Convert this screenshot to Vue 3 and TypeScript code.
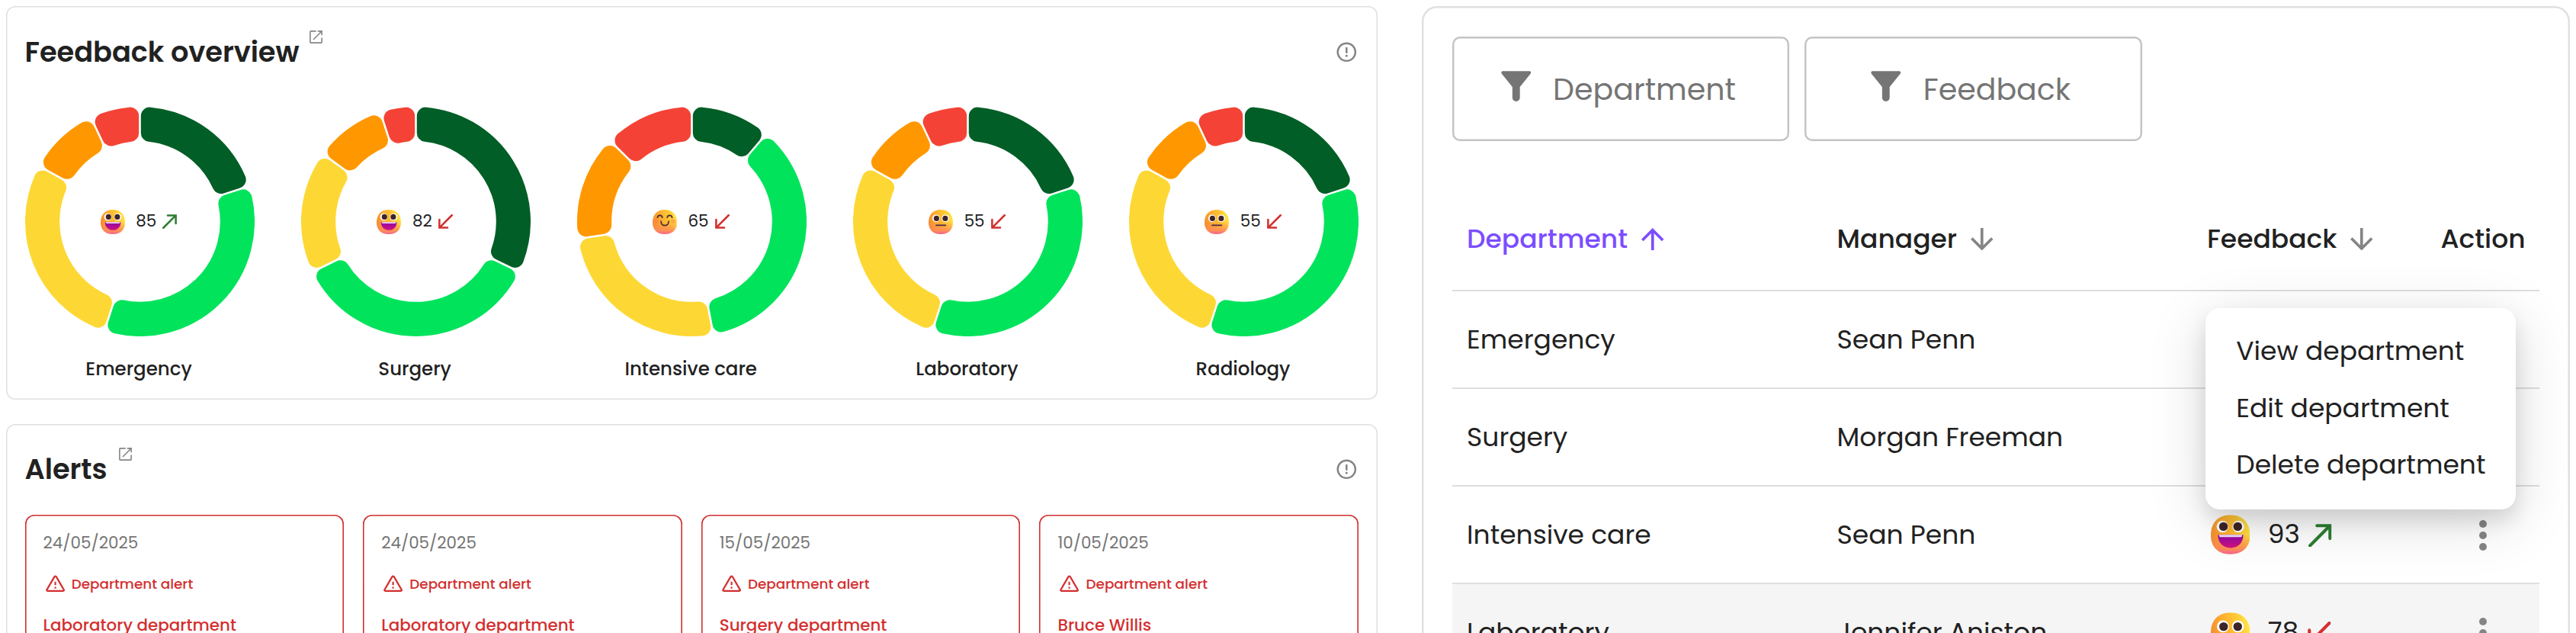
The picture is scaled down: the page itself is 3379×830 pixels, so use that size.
<script setup lang="ts">
import { computed } from 'vue'

type Mood = 'grin' | 'smile' | 'neutral'
type Trend = 'up' | 'down'

interface Rating {
  score: number
  mood: Mood
  trend: Trend
}

interface Donut extends Rating {
  name: string
  shares: number[]
}

interface Row {
  department: string
  manager: string
  rating?: Rating
  hover?: boolean
}

const palette = ['#005e26', '#02e35c', '#fdd835', '#ff9800', '#f44336']

const donuts: Donut[] = [
  { name: 'Emergency', score: 85, mood: 'grin', trend: 'up', shares: [20, 35, 28, 10, 7] },
  { name: 'Surgery', score: 82, mood: 'grin', trend: 'down', shares: [32.2, 35.6, 17.2, 10, 5] },
  { name: 'Intensive care', score: 65, mood: 'smile', trend: 'down', shares: [11.2, 35.8, 25.6, 14.8, 12.6] },
  { name: 'Laboratory', score: 55, mood: 'neutral', trend: 'down', shares: [20, 35, 28, 10, 7] },
  { name: 'Radiology', score: 55, mood: 'neutral', trend: 'down', shares: [20, 35, 28, 10, 7] },
]

const alerts = [
  { date: '24/05/2025', subject: 'Laboratory department' },
  { date: '24/05/2025', subject: 'Laboratory department' },
  { date: '15/05/2025', subject: 'Surgery department' },
  { date: '10/05/2025', subject: 'Bruce Willis' },
]

const rows: Row[] = [
  { department: 'Emergency', manager: 'Sean Penn' },
  { department: 'Surgery', manager: 'Morgan Freeman' },
  { department: 'Intensive care', manager: 'Sean Penn', rating: { score: 93, mood: 'grin', trend: 'up' } },
  { department: 'Laboratory', manager: 'Jennifer Aniston', rating: { score: 78, mood: 'neutral', trend: 'down' }, hover: true },
]

const filters = ['Department', 'Feedback']
const menu = ['View department', 'Edit department', 'Delete department']

const OUTER = 150.5
const INNER = 105.3
const ROUND = 11.5
const GAP = 1.3

// Each slice is inset by the corner radius and stroked back out with round joins.
function slice(from: number, to: number): string {
  const inset = ROUND + GAP
  const ro = OUTER - ROUND
  const ri = INNER + ROUND
  const a0 = from * Math.PI * 2
  const a1 = to * Math.PI * 2
  const point = (r: number, a: number) => `${(r * Math.sin(a)).toFixed(2)} ${(-r * Math.cos(a)).toFixed(2)}`
  const dOut = Math.asin(inset / ro)
  const dIn = Math.asin(inset / ri)
  const large = a1 - a0 - 2 * dOut > Math.PI ? 1 : 0
  return [
    `M${point(ro, a0 + dOut)}`,
    `A${ro} ${ro} 0 ${large} 1 ${point(ro, a1 - dOut)}`,
    `L${point(ri, a1 - dIn)}`,
    `A${ri} ${ri} 0 ${large} 0 ${point(ri, a0 + dIn)}Z`,
  ].join('')
}

const charts = computed(() =>
  donuts.map((d) => {
    let at = 0
    const slices = d.shares.map((share, i) => {
      const path = slice(at / 100, (at + share) / 100)
      at += share
      return { path, color: palette[i] }
    })
    return { ...d, slices }
  }),
)
</script>

<template>
  <svg class="defs" aria-hidden="true">
    <defs>
      <linearGradient id="skin" x1="0" y1="0.5" x2="1" y2="0.25">
        <stop offset="0" stop-color="#f28d2e" />
        <stop offset="0.3" stop-color="#fdaa30" />
        <stop offset="0.7" stop-color="#ffc933" />
        <stop offset="1" stop-color="#ffe84a" />
      </linearGradient>
      <linearGradient id="blush" x1="0" y1="0" x2="0" y2="1">
        <stop offset="0.5" stop-color="#ff8a50" stop-opacity="0" />
        <stop offset="0.85" stop-color="#ff8a5c" stop-opacity="0.85" />
        <stop offset="1" stop-color="#f8629a" />
      </linearGradient>
      <linearGradient id="mouth" x1="0" y1="0" x2="0" y2="1">
        <stop offset="0" stop-color="#8d06a8" />
        <stop offset="1" stop-color="#d3127f" />
      </linearGradient>
      <symbol id="face" viewBox="0 0 32 32">
        <path d="M16 0C25.800 0 32 6 32 16.500C32 26.200 25.800 32 16 32S0 26.200 0 16.500C0 6 6.200 0 16 0Z" fill="url(#skin)" />
        <path d="M16 0C25.800 0 32 6 32 16.500C32 26.200 25.800 32 16 32S0 26.200 0 16.500C0 6 6.200 0 16 0Z" fill="url(#blush)" />
      </symbol>
      <symbol id="grin" viewBox="0 0 32 32">
        <use href="#face" />
        <circle cx="9.500" cy="9.500" r="4.800" fill="#fff" />
        <circle cx="22.400" cy="9.500" r="4.800" fill="#fff" />
        <circle cx="10.300" cy="9.400" r="3.550" fill="#3d2429" />
        <circle cx="21.900" cy="9.400" r="3.550" fill="#3d2429" />
        <path d="M5.800 16.200H26.400C26.400 23 22 26.800 16.100 26.800S5.800 23 5.800 16.200Z" fill="url(#mouth)" />
        <path d="M6.600 16.200H25.600Q25.500 18 24.300 18H7.900Q6.700 18 6.600 16.200Z" fill="#f1dcfb" />
      </symbol>
      <symbol id="smile" viewBox="0 0 32 32">
        <use href="#face" />
        <ellipse cx="4.800" cy="15" rx="3.500" ry="3" fill="#ff7a5c" opacity="0.45" />
        <ellipse cx="27.200" cy="15" rx="3.500" ry="3" fill="#ff7a5c" opacity="0.45" />
        <g fill="none" stroke="#4b2b3a" stroke-width="1.700" stroke-linecap="round">
          <path d="M6.400 10.200C7.200 6.500 12 6.500 12.900 10.200" />
          <path d="M19.200 10.200C20 6.500 24.800 6.500 25.700 10.200" />
          <path d="M11 15C11 22.600 21.200 22.600 21.200 15" />
        </g>
      </symbol>
      <symbol id="neutral" viewBox="0 0 32 32">
        <use href="#face" />
        <circle cx="9.900" cy="11.300" r="4.900" fill="#fff" />
        <circle cx="22.100" cy="11.300" r="4.900" fill="#fff" />
        <circle cx="10.400" cy="11.400" r="3.550" fill="#3d2429" />
        <circle cx="21.900" cy="11.400" r="3.550" fill="#3d2429" />
        <path d="M10 20.400H22.400" stroke="#4b2b4a" stroke-width="1.700" stroke-linecap="round" />
      </symbol>
      <symbol id="trend" viewBox="0 0 30 30">
        <path d="M2 28L27 3M11 2.200H27.800V18.800" fill="none" stroke="currentColor" stroke-width="4" stroke-linecap="round" />
      </symbol>
      <symbol id="open" viewBox="0 0 17 17">
        <path d="M8.700 .9H1.700Q.9 .9 .9 1.700V15.300Q.9 16.100 1.700 16.100H15.300Q16.100 16.100 16.100 15.300V9.500" fill="none" stroke="currentColor" stroke-width="1.600" />
        <path d="M5 12L15.700 1.300M10.700 .9H16.100V6.300" fill="none" stroke="currentColor" stroke-width="1.600" />
      </symbol>
      <symbol id="info" viewBox="0 0 24 24">
        <circle cx="12" cy="12" r="9.100" fill="none" stroke="currentColor" stroke-width="1.900" />
        <path d="M12 7.900V12.300" stroke="currentColor" stroke-width="2" stroke-linecap="round" />
        <circle cx="12" cy="15.900" r="1.150" fill="currentColor" />
      </symbol>
    </defs>
  </svg>

  <main class="page">
    <div class="left">
      <section class="card overview">
        <header class="head">
          <h2>Feedback overview</h2>
          <svg class="open"><use href="#open" /></svg>
          <svg class="info"><use href="#info" /></svg>
        </header>
        <div class="donuts">
          <figure v-for="chart in charts" :key="chart.name" class="donut">
            <div class="ring">
              <svg viewBox="-150.500 -150.500 301 301">
                <path
                  v-for="(s, i) in chart.slices"
                  :key="i"
                  :d="s.path"
                  :fill="s.color"
                  :stroke="s.color"
                  :stroke-width="ROUND * 2"
                  stroke-linejoin="round"
                />
              </svg>
              <div class="score">
                <svg class="emoji"><use :href="'#' + chart.mood" /></svg>
                <span>{{ chart.score }}</span>
                <svg class="trend" :class="chart.trend"><use href="#trend" /></svg>
              </div>
            </div>
            <figcaption>{{ chart.name }}</figcaption>
          </figure>
        </div>
      </section>

      <section class="card alerts">
        <header class="head">
          <h2>Alerts</h2>
          <svg class="open"><use href="#open" /></svg>
          <svg class="info"><use href="#info" /></svg>
        </header>
        <div class="alert-list">
          <article v-for="(alert, i) in alerts" :key="i" class="alert">
            <time>{{ alert.date }}</time>
            <div class="kind">
              <svg viewBox="0 0 24 24">
                <path d="M12 3.100Q12.700 3.100 13.100 3.800L21.700 18.500Q22.500 20.100 20.900 20.100H3.100Q1.500 20.100 2.300 18.500L10.900 3.800Q11.300 3.100 12 3.100Z" fill="none" stroke="currentColor" stroke-width="2" stroke-linejoin="round" />
                <path d="M12 9.500V13.500M12 15.500V17.500" stroke="currentColor" stroke-width="1.900" />
              </svg>
              <span>Department alert</span>
            </div>
            <strong>{{ alert.subject }}</strong>
          </article>
        </div>
      </section>
    </div>

    <section class="panel">
      <div class="filters">
        <button v-for="f in filters" :key="f" type="button">
          <svg viewBox="0 0 40 40">
            <path d="M1.800 0H38.200Q40.400 .8 39.300 3.300L25 21V35.200A5 5 0 0 1 15 35.200V21L.7 3.300Q-.4 .8 1.800 0Z" fill="currentColor" />
          </svg>
          <span>{{ f }}</span>
        </button>
      </div>

      <div class="table">
        <div class="row header">
          <div class="cell sorted">
            Department
            <svg viewBox="4 4 16 16"><path d="m4 12 1.410 1.410L11 7.830V20h2V7.830l5.580 5.590L20 12l-8-8-8 8z" /></svg>
          </div>
          <div class="cell">
            Manager
            <svg viewBox="4 4 16 16"><path d="m20 12-1.410-1.410L13 16.170V4h-2v12.170l-5.580-5.590L4 12l8 8 8-8z" /></svg>
          </div>
          <div class="cell">
            Feedback
            <svg viewBox="4 4 16 16"><path d="m20 12-1.410-1.410L13 16.170V4h-2v12.170l-5.580-5.590L4 12l8 8 8-8z" /></svg>
          </div>
          <div class="cell action">Action</div>
        </div>
        <div v-for="row in rows" :key="row.department" class="row" :class="{ hover: row.hover }">
          <div class="cell">{{ row.department }}</div>
          <div class="cell">{{ row.manager }}</div>
          <template v-if="row.rating">
            <div class="cell feedback">
              <svg class="emoji"><use :href="'#' + row.rating.mood" /></svg>
              <span>{{ row.rating.score }}</span>
              <svg class="trend" :class="row.rating.trend"><use href="#trend" /></svg>
            </div>
            <div class="cell more">
              <svg viewBox="0 0 10 40">
                <circle cx="5" cy="5" r="5" />
                <circle cx="5" cy="20" r="5" />
                <circle cx="5" cy="35" r="5" />
              </svg>
            </div>
          </template>
        </div>
      </div>

      <ul class="menu">
        <li v-for="item in menu" :key="item">{{ item }}</li>
      </ul>
    </section>
  </main>
</template>

<style>
html,
body {
  margin: 0;
  overflow: hidden;
  background: #fff;
}
</style>

<style scoped>
.defs {
  position: absolute;
  width: 0;
  height: 0;
}

.page {
  box-sizing: border-box;
  display: flex;
  gap: 58px;
  width: 3379px;
  height: 830px;
  padding: 8px 0 0 8px;
  overflow: hidden;
  color: #212121;
  font-family: Poppins, Inter, "Open Sans", sans-serif;
}

.left {
  flex: none;
  display: flex;
  flex-direction: column;
  gap: 32px;
  width: 1799px;
}

.card {
  box-sizing: border-box;
  flex: none;
  padding: 32.5px 25px 0 24.500px;
  border-radius: 12px;
  box-shadow: inset 0 0 0 1.530px #e0e0e0;
}

.overview {
  height: 515.5px;
}

.alerts {
  height: 420px;
}

.head {
  display: flex;
  align-items: center;
  height: 55px;
}

.head h2 {
  margin: 0;
  font-size: 36.760px;
  font-weight: 600;
  line-height: 55px;
  letter-spacing: -0.05px;
}

.head .open {
  align-self: flex-start;
  width: 17px;
  height: 17px;
  margin: -1px 0 0 13.500px;
  color: #858585;
}

.alerts .open {
  margin-left: 15px;
}

.head .info {
  width: 30.600px;
  height: 30.600px;
  margin-left: auto;
  color: #858585;
}

.donuts {
  display: flex;
  justify-content: space-between;
  margin-top: 44.500px;
}

.donut {
  margin: 0;
  width: 301px;
}

.ring {
  display: grid;
  height: 301px;
}

.ring > * {
  grid-area: 1 / 1;
}

.score {
  display: flex;
  align-items: center;
  justify-content: center;
  padding-right: 2px;
}

.score .emoji {
  width: 32px;
  height: 32px;
}

.score span {
  margin: -2px 8px 0 14.500px;
  font-size: 21.440px;
  line-height: 32px;
}

.score .trend {
  width: 19px;
  height: 19px;
}

.trend.up {
  color: #2e7d32;
}

.trend.down {
  color: #d32f2f;
  transform: rotate(180deg);
}

figcaption {
  margin-top: 24.500px;
  padding-right: 2px;
  font-size: 24.500px;
  font-weight: 500;
  line-height: 36px;
  text-align: center;
}

.alert-list {
  display: grid;
  grid-template-columns: repeat(4, 1fr);
  gap: 25px;
  margin-top: 31.500px;
}

.alert {
  box-sizing: border-box;
  height: 280px;
  padding: 21px 24px;
  border-radius: 12px;
  box-shadow: inset 0 0 0 1.600px #d32f2f;
  color: #d32f2f;
}

.alert time {
  display: block;
  color: #757575;
  font-size: 21.440px;
  line-height: 32px;
}

.kind {
  display: flex;
  align-items: center;
  height: 28px;
  margin: 24px 0 24px;
  font-size: 18.380px;
  font-weight: 500;
}

.kind svg {
  width: 27.200px;
  height: 27.200px;
  margin: 0 8px 0 2px;
}

.alert strong {
  display: block;
  font-size: 21.440px;
  font-weight: 500;
  line-height: 32px;
}

.panel {
  position: relative;
  box-sizing: border-box;
  flex: none;
  width: 1506px;
  height: 960px;
  padding: 40px 40px 0 39.500px;
  border-radius: 20px;
  box-shadow: inset 0 0 0 2.460px #e0e0e0;
}

.filters {
  display: flex;
  gap: 20px;
}

.filters button {
  box-sizing: border-box;
  display: flex;
  align-items: center;
  justify-content: center;
  width: 442.500px;
  height: 137px;
  padding: 0 6px 0 0;
  border: 0;
  border-radius: 10px;
  background: none;
  box-shadow: inset 0 0 0 2.460px #c4c4c4;
  color: #757575;
  font: 400 39.500px / 56px Poppins, Inter, "Open Sans", sans-serif;
}

.filters svg {
  width: 39.500px;
  height: 40px;
  margin: 0 29px 7px 0;
}

.filters span {
  margin-top: 2px;
}

.table {
  margin-top: 62px;
}

.row {
  box-sizing: border-box;
  display: grid;
  grid-template-columns: 485.500px 485.500px 308px 147.500px;
  width: 1426.500px;
  height: 128px;
  border-bottom: 2px solid #dedede;
  font-size: 34.500px;
}

.row.header {
  height: 135px;
  font-weight: 500;
}

.row.hover {
  background: #f5f5f5;
}

.cell {
  display: flex;
  align-items: center;
  padding-left: 19.600px;
  white-space: nowrap;
}

.cell.action {
  padding-left: 18px;
}

.header svg {
  width: 29.500px;
  height: 29.500px;
  margin-left: 18px;
  fill: #858585;
}

.header .sorted {
  color: #7c4dff;
}

.header .sorted svg {
  fill: #7c4dff;
}

.feedback .emoji {
  width: 51.500px;
  height: 52px;
  margin-left: 4.600px;
}

.feedback span {
  margin: -2px 11.500px 0 23.500px;
}

.feedback .trend {
  width: 30.500px;
  height: 30.500px;
  margin-top: 2px;
}

.more {
  justify-content: center;
  padding: 0;
}

.more svg {
  width: 10px;
  height: 40px;
  margin-top: 1px;
  fill: #858585;
}

.menu {
  position: absolute;
  top: 396px;
  left: 1028px;
  box-sizing: border-box;
  width: 407px;
  height: 264px;
  margin: 0;
  padding: 19px 0 0 40.300px;
  border-radius: 19px;
  background: #fff;
  box-shadow:
    0 14px 26px rgba(0, 0, 0, 0.11),
    0 16px 76px rgba(0, 0, 0, 0.15);
  list-style: none;
  font-size: 34.500px;
  line-height: 74.700px;
  white-space: nowrap;
}
</style>
